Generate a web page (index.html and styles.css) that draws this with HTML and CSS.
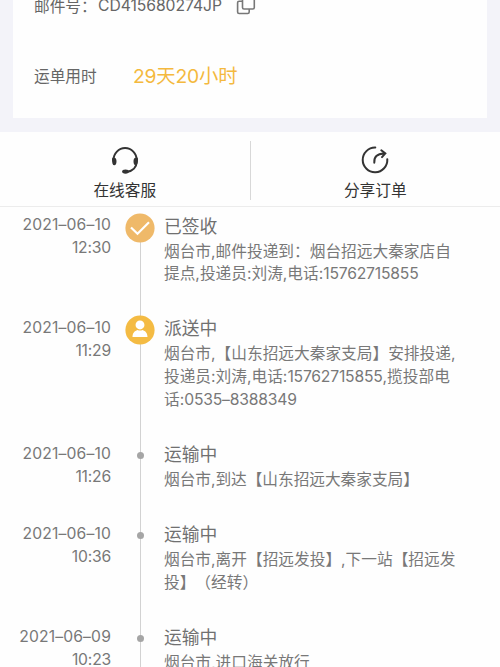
FILE: index.html
```html
<!DOCTYPE html>
<html lang="zh-CN">
<head>
<meta charset="utf-8">
<title>物流详情</title>
<link rel="stylesheet" href="styles.css">
</head>
<body>
<section class="summary">
  <div class="card">
    <div class="row"><span class="label">邮件号：</span><span class="code">CD415680274JP</span>
      <svg class="copy" viewBox="0 0 20 20"><path d="M6.500 -3v14.500q0 1.500 1.500 1.500h8.800q1.500 0 1.500-1.500V-3M6.500 5.200H3.100q-1.500 0-1.500 1.500V16q0 1.500 1.500 1.500h8.600q1.500 0 1.500-1.500v-2.800"/></svg>
    </div>
    <div class="row usage"><span class="label">运单用时</span><span class="duration"><i>29</i>天<i>20</i>小时</span></div>
  </div>
</section>
<nav class="actions">
  <a class="action">
    <svg viewBox="0 0 28 28"><path class="stroke" d="M2.500 14.500V14a11.600 11.900 0 0 1 23.200 0v1.500c0 5.500-4 9.500-10 10.500"/><path class="solid" d="M1 13q0-1.500 1.500-1.500c2.200 0 3 1.300 3 3.800s-.8 4-2.200 4C1.700 19.300 1 17 1 13zM27 13q0-1.500-1.500-1.500c-2.200 0-3 1.300-3 3.800s.8 4 2.200 4c1.600 0 2.300-2.300 2.300-6.300z"/><ellipse class="solid" cx="14.500" cy="25.600" rx="3.400" ry="2.100"/></svg>
    <span>在线客服</span>
  </a>
  <a class="action">
    <svg viewBox="0 0 28 28"><path class="stroke" d="M14.300 1.600A12.300 12.300 0 1 0 26.300 13.200M13.300 16.700C12.800 11 16 7.700 23 7.400M20.300 4.300l4 3.100-3.300 3.700"/></svg>
    <span>分享订单</span>
  </a>
</nav>
<main class="timeline">
  <article class="event">
    <time><span class="date">2021–06–10</span><span>12:30</span></time>
    <div class="track"><svg class="badge done" viewBox="0 0 30 30"><circle cx="15" cy="15" r="14.600"/><path d="M6 14.500l6.500 6.300L24 9.200"/></svg></div>
    <div class="body"><h2>已签收</h2><p>烟台市,邮件投递到：烟台招远大秦家店自<br>提点,投递员:刘涛,电话:<i>15762715855</i></p></div>
  </article>
  <article class="event">
    <time><span class="date">2021–06–10</span><span>11:29</span></time>
    <div class="track"><svg class="badge person" viewBox="0 0 30 30"><circle cx="15" cy="15" r="14.600"/><path d="M15 5.500a4.300 4.300 0 0 1 0 8.900 4.300 4.300 0 0 1 0-8.900zM7.500 22c0-4 2.100-6.200 5-7.100q2.500 1.300 5 0c2.900.9 5 3.100 5 7.100z"/></svg></div>
    <div class="body"><h2>派送中</h2><p>烟台市,【山东招远大秦家支局】安排投递,<br>投递员:刘涛,电话:<i>15762715855</i>,揽投部电<br>话:<i>0535–8388349</i></p></div>
  </article>
  <article class="event">
    <time><span class="date">2021–06–10</span><span>11:26</span></time>
    <div class="track"><b class="dot"></b></div>
    <div class="body"><h2>运输中</h2><p class="tight">烟台市,到达【山东招远大秦家支局】</p></div>
  </article>
  <article class="event">
    <time><span class="date">2021–06–10</span><span>10:36</span></time>
    <div class="track"><b class="dot"></b></div>
    <div class="body"><h2>运输中</h2><p>烟台市,离开【招远发投】,下一站【招远发<br>投】（经转）</p></div>
  </article>
  <article class="event">
    <time><span class="date">2021–06–09</span><span>10:23</span></time>
    <div class="track"><b class="dot"></b></div>
    <div class="body"><h2>运输中</h2><p>烟台市,进口海关放行</p></div>
  </article>
</main>
</body>
</html>
```
FILE: styles.css
```css
* { box-sizing: border-box; }
html, body { height: 667px; overflow: hidden; }
body {
  margin: 0;
  background: #fefefe;
  font-family: Inter, "Noto Sans CJK SC", sans-serif;
  font-size: 15.7px;
  color: #787878;
  text-spacing-trim: space-all;
}
i { font-style: normal; }
.summary { height: 132px; padding: 0 13px 14px; background: #f3f3f9; }
.card { height: 118px; padding-left: 21px; background: #fefefe; overflow: hidden; }
.row { display: flex; align-items: center; height: 24px; margin-top: -7px; white-space: nowrap; color: #666; }
.label { width: 64px; }
.code { width: 125px; letter-spacing: -.05px; }
.copy { width: 20px; height: 20px; margin-left: 13px; margin-top: 1px; overflow: visible; fill: none; stroke: #777; stroke-width: 1.6; }
.usage { margin-top: 46px; }
.duration { margin-left: 35px; font-size: 19.3px; color: #f4b93e; }
.duration i { letter-spacing: -.25px; }
.actions { display: flex; height: 75px; padding-top: 9px; border-bottom: 1px solid #ececec; }
.action { flex: 1; display: flex; flex-direction: column; align-items: center; height: 59px; color: #333; }
.action + .action { border-left: 1px solid #d8d8d8; }
.action svg { width: 28px; height: 28px; margin-top: 5px; flex-shrink: 0; }
.action span { line-height: 24px; margin-top: 5px; }
.stroke { fill: none; stroke: #333; stroke-width: 2; stroke-linecap: round; }
.solid { fill: #333; }
.event { display: flex; padding-bottom: 32.4px; }
.event time { width: 111px; padding-top: 7px; margin-bottom: -10px; text-align: right; line-height: 22.800px; letter-spacing: -.2px; }
.event time span { display: block; }
.event .date { letter-spacing: .14px; }
.track {
  display: flex; justify-content: center; align-items: flex-start;
  width: 30px; margin: 0 9px -32.4px 14px; padding-top: 5px;
  background: linear-gradient(#d2d2d2, #d2d2d2) 15px 0 / 1px 100% no-repeat;
}
.event:first-child .track { background-position: 15px 20px; }
.badge { width: 30px; height: 30px; margin-top: .5px; }
.dot { width: 7px; height: 7px; margin: 11px 0 0 1px; border-radius: 50%; background: #a5a5a5; }
.done circle { fill: #efb969; }
.done path { fill: none; stroke: #fff; stroke-width: 2.200; }
.person circle { fill: #f4bb43; }
.person path { fill: #fff; }
.body { flex: 1; padding-top: 7.500px; white-space: nowrap; }
h2 { margin: 0; font-size: 17.800px; font-weight: 400; line-height: 24px; height: 26px; color: #707070; }
p { margin: 0 0 -8.500px; line-height: 22.800px; }
p i { letter-spacing: -.2px; }
.tight { letter-spacing: -.04px; }
```
